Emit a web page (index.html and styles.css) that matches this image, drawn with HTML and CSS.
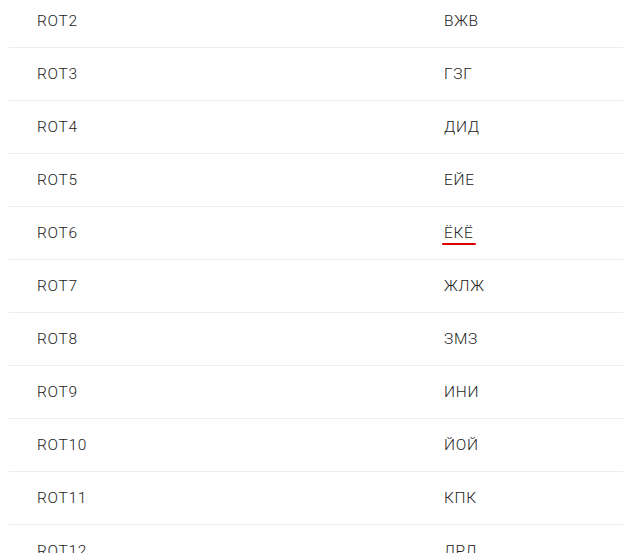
FILE: index.html
```html
<!DOCTYPE html>
<html>
<head>
<meta charset="utf-8">
<link rel="stylesheet" href="styles.css">
</head>
<body>
<div class="table">
  <div class="row"><div class="cell">ROT2</div><div class="cell">ВЖВ</div></div>
  <div class="row"><div class="cell">ROT3</div><div class="cell">ГЗГ</div></div>
  <div class="row"><div class="cell">ROT4</div><div class="cell">ДИД</div></div>
  <div class="row"><div class="cell">ROT5</div><div class="cell">ЕЙЕ</div></div>
  <div class="row"><div class="cell">ROT6</div><div class="cell"><span class="mark">ЁКЁ</span></div></div>
  <div class="row"><div class="cell">ROT7</div><div class="cell">ЖЛЖ</div></div>
  <div class="row"><div class="cell">ROT8</div><div class="cell">ЗМЗ</div></div>
  <div class="row"><div class="cell">ROT9</div><div class="cell">ИНИ</div></div>
  <div class="row"><div class="cell">ROT10</div><div class="cell">ЙОЙ</div></div>
  <div class="row"><div class="cell">ROT11</div><div class="cell">КПК</div></div>
  <div class="row"><div class="cell">ROT12</div><div class="cell">ЛРЛ</div></div>
  <div class="row"><div class="cell">ROT13</div><div class="cell">МСМ</div></div>
</div>
</body>
</html>
```
FILE: styles.css
```css
html, body {
  margin: 0;
  padding: 0;
  background: #fff;
  overflow: hidden;
}
body {
  padding-left: 9px;
  font-family: Roboto, "Noto Sans", sans-serif;
  font-size: 15.5px;
  font-weight: 300;
  letter-spacing: 0.7px;
  color: #222;
}
.table {
  margin-top: -5px;
  display: flex;
  flex-direction: column;
}
.row {
  display: grid;
  grid-template-columns: 407px 1fr;
  height: 52px;
  border-bottom: 1px solid #eeeeee;
  align-items: center;
}
.cell {
  padding-left: 28px;
  line-height: 20px;
}
.mark {
  position: relative;
}
.mark::after {
  content: "";
  position: absolute;
  left: -2px;
  right: -2px;
  bottom: -3px;
  height: 2.5px;
  border-radius: 1.5px;
  background: #e00000;
}
```
